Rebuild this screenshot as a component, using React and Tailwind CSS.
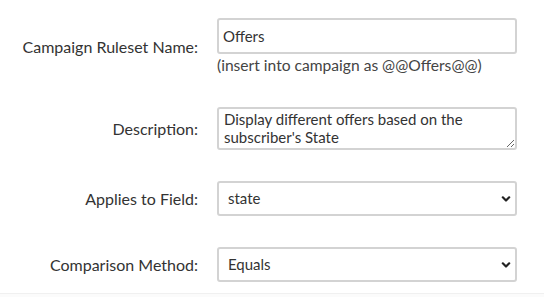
import { useState } from 'react'

const font = { fontFamily: 'Lato, "Open Sans", sans-serif' }

function Chevron() {
  return (
    <svg className="pointer-events-none absolute right-[6px] top-1/2 -translate-y-1/2" width="10" height="7" viewBox="0 0 10 7">
      <path d="M1.8 1.8 L5 5 L8.2 1.8" fill="none" stroke="#222" strokeWidth="2.2" strokeLinecap="round" strokeLinejoin="round" />
    </svg>
  )
}

function Select({ value, options }) {
  const [v, setV] = useState(value)
  return (
    <div className="relative w-[300px]">
      <select
        value={v}
        onChange={e => setV(e.target.value)}
        className="appearance-none w-full h-[35px] border-2 border-[#d3d3d3] rounded-[3px] bg-white pl-[9px] text-[15px] text-[#333] outline-none"
        style={font}
      >
        {options.map(o => <option key={o} value={o}>{o}</option>)}
      </select>
      <Chevron />
    </div>
  )
}

export default function App() {
  const [name, setName] = useState('Offers')
  const [desc, setDesc] = useState("Display different offers based on the subscriber's State")

  return (
    <div className="w-[544px] h-[297px] bg-white flex flex-col overflow-hidden" style={font}>
      <div className="flex-1 pt-[18px] grid grid-cols-[198px_300px] gap-x-[19px] gap-y-[31px] items-center content-start">
        {/* Ruleset name */}
        <label className="text-right text-[16px] text-[#333]">Campaign Ruleset Name:</label>
        <div className="flex flex-col">
          <input
            value={name}
            onChange={e => setName(e.target.value)}
            className="w-[300px] h-[36px] border-2 border-[#d3d3d3] rounded-[3px] px-[4px] text-[15px] text-[#333] outline-none"
            style={font}
          />
          <span className="text-[15.6px] text-[#444] leading-[22px]">(insert into campaign as @@{name}@@)</span>
        </div>

        {/* Description */}
        <label className="text-right text-[16px] text-[#333]">Description:</label>
        <textarea
          value={desc}
          onChange={e => setDesc(e.target.value)}
          className="w-[300px] h-[43px] border-2 border-[#d3d3d3] rounded-[3px] px-[5px] pt-[1px] text-[15px] leading-[18px] text-[#333] outline-none resize-y"
          style={font}
        />

        {/* Field */}
        <label className="text-right text-[16px] text-[#333]">Applies to Field:</label>
        <Select value="state" options={['state', 'city', 'zip', 'country']} />

        {/* Method */}
        <label className="text-right text-[16px] text-[#333]">Comparison Method:</label>
        <Select value="Equals" options={['Equals', 'Contains', 'Starts With', 'Ends With']} />
      </div>
      <div className="h-[4px] border-t border-[#f0f0f0] bg-[#fbfbfb]" />
    </div>
  )
}
